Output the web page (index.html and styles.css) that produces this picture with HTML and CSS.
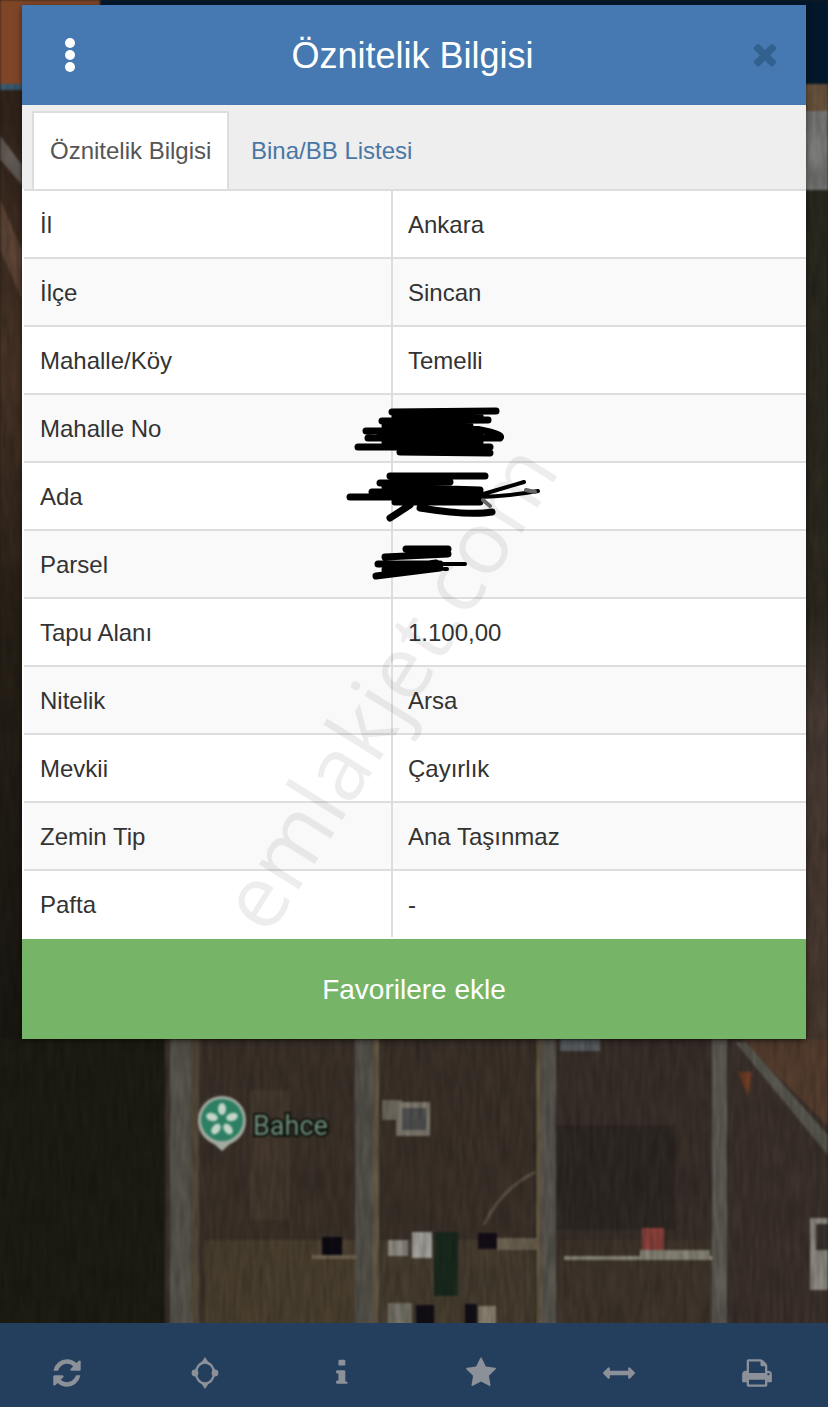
FILE: index.html
```html
<!DOCTYPE html>
<html lang="tr">
<head>
  <meta charset="UTF-8">
  <title>Öznitelik Bilgisi</title>
  <link rel="stylesheet" href="styles.css">
</head>
<body>
  <div class="screen">
    <!-- map behind the dialog -->
    <svg class="map" viewBox="0 0 828 1407" aria-hidden="true">
      <defs>
        <filter id="grain" x="0" y="0" width="100%" height="100%">
          <feTurbulence type="fractalNoise" baseFrequency="0.3 0.03" numOctaves="3" seed="7"/>
          <feColorMatrix type="matrix" values="0 0 0 0 0  0 0 0 0 0  0 0 0 0 0  1.6 0 0 0 -0.45"/>
        </filter>
        <linearGradient id="left-side" x1="0" y1="0" x2="0" y2="1">
          <stop offset="0" stop-color="#33251c"/>
          <stop offset="0.3" stop-color="#4a3528"/>
          <stop offset="0.55" stop-color="#2a2219"/>
          <stop offset="1" stop-color="#191812"/>
        </linearGradient>
        <linearGradient id="right-side" x1="0" y1="0" x2="0" y2="1">
          <stop offset="0" stop-color="#2b2a20"/>
          <stop offset="0.5" stop-color="#2e2a20"/>
          <stop offset="0.62" stop-color="#4b3d36"/>
          <stop offset="1" stop-color="#493a30"/>
        </linearGradient>
      </defs>

      <!-- top strip -->
      <rect x="-4" y="-4" width="836" height="88" fill="#03172b"/>
      <rect x="-4" y="-4" width="104" height="88" fill="#7f4527"/>
      <rect x="-4" y="84" width="104" height="6" fill="#3c5f74"/>
      <rect x="800" y="84" width="32" height="27" fill="#6d5740"/>
      <rect x="800" y="111" width="32" height="79" fill="#7b7b79"/>

      <!-- sides -->
      <rect x="-4" y="90" width="34" height="950" fill="url(#left-side)"/>
      <path d="M-4 130 L22 165 L22 185 L-4 155Z" fill="#8d8a86" opacity="0.55"/>
      <path d="M-4 190 L22 250 L22 300 L-4 240Z" fill="#6e5140" opacity="0.7"/>
      <rect x="800" y="190" width="32" height="850" fill="url(#right-side)"/>

      <!-- fields below the dialog -->
      <rect x="-4" y="1039" width="169" height="288" fill="#1e1d13"/>
      <rect x="165" y="1039" width="215" height="288" fill="#3c322a"/>
      <rect x="380" y="1039" width="155" height="288" fill="#3c322a"/>
      <rect x="555" y="1039" width="160" height="288" fill="#3a302a"/>
      <rect x="555" y="1125" width="120" height="105" fill="#2f2824"/>
      <rect x="727" y="1039" width="105" height="288" fill="#3d322c"/>
      <path d="M740 1039 H832 V1130Z" fill="#573f30"/>
      <rect x="205" y="1240" width="155" height="87" fill="#4c4130"/>
      <rect x="380" y="1240" width="155" height="87" fill="#483e31"/>
      <rect x="555" y="1240" width="160" height="87" fill="#40362d"/>
      <rect x="250" y="1090" width="40" height="130" fill="#4c3f33" opacity="0.6"/>

      <!-- roads -->
      <rect x="170" y="1039" width="20" height="288" fill="#5a574f"/>
      <rect x="190" y="1039" width="9" height="288" fill="#564c3d"/>
      <rect x="355" y="1039" width="18" height="288" fill="#56534c"/>
      <rect x="373" y="1039" width="6" height="288" fill="#665a46"/>
      <rect x="536" y="1039" width="5" height="288" fill="#665a46"/>
      <rect x="541" y="1039" width="15" height="288" fill="#5a5750"/>
      <rect x="712" y="1039" width="15" height="288" fill="#605d56"/>
      <path d="M735 1042 L746 1042 L832 1140 L832 1160Z" fill="#595951"/>
      <path d="M484 1225 Q500 1190 535 1172" fill="none" stroke="#5f5547" stroke-width="3"/>

      <!-- buildings -->
      <rect x="382" y="1100" width="20" height="20" fill="#6f6a5e"/>
      <rect x="396" y="1102" width="34" height="34" fill="#807b6f"/>
      <rect x="402" y="1108" width="24" height="22" fill="#4f4f50"/>
      <rect x="560" y="1039" width="40" height="12" fill="#5a6064"/>
      <rect x="322" y="1237" width="20" height="20" fill="#0e0a14"/>
      <rect x="312" y="1255" width="45" height="4" fill="#6f6450"/>
      <rect x="388" y="1240" width="20" height="16" fill="#8f8c84"/>
      <rect x="412" y="1232" width="20" height="26" fill="#a5a39c"/>
      <rect x="434" y="1232" width="24" height="64" fill="#1a2a1e"/>
      <rect x="478" y="1233" width="19" height="16" fill="#140d17"/>
      <rect x="497" y="1238" width="40" height="12" fill="#6f6553"/>
      <rect x="642" y="1228" width="22" height="22" fill="#8e433c"/>
      <rect x="564" y="1256" width="148" height="4" fill="#8e8b7c"/>
      <rect x="640" y="1250" width="70" height="10" fill="#8a8779"/>
      <rect x="810" y="1218" width="22" height="72" fill="#8d8a80"/>
      <rect x="816" y="1224" width="16" height="26" fill="#3a3430"/>
      <rect x="416" y="1305" width="18" height="22" fill="#120e16"/>
      <rect x="388" y="1303" width="24" height="24" fill="#77746a"/>
      <rect x="465" y="1304" width="12" height="23" fill="#120e16"/>
      <rect x="478" y="1306" width="18" height="21" fill="#8a8070"/>
      <path d="M738 1072 L752 1072 L748 1096Z" fill="#6e3c24"/>

      <rect x="0" y="84" width="828" height="1240" filter="url(#grain)" opacity="0.28"/>

      <!-- place marker -->
      <path d="M198 1120 a24 24 0 0 1 48 0 c0 14 -9 21 -16 24 l-8 7 l-8 -7 c-7 -3 -16 -10 -16 -24Z" fill="#a3aaa0"/>
      <circle cx="222" cy="1120" r="21" fill="#2c7f63"/>
      <g fill="#c5d6c8">
        <ellipse cx="222" cy="1109" rx="4" ry="6"/>
        <ellipse cx="232" cy="1117" rx="4" ry="6" transform="rotate(72 232 1117)"/>
        <ellipse cx="228" cy="1129" rx="4" ry="6" transform="rotate(144 228 1129)"/>
        <ellipse cx="216" cy="1129" rx="4" ry="6" transform="rotate(216 216 1129)"/>
        <ellipse cx="212" cy="1117" rx="4" ry="6" transform="rotate(288 212 1117)"/>
      </g>
      <text class="map-label" x="253" y="1135">Bahce</text>
    </svg>

    <div class="dialog">
      <header class="dialog-head">
        <div class="kebab"><span></span><span></span><span></span></div>
        <h1>Öznitelik Bilgisi</h1>
        <svg class="close-icon" viewBox="0 0 1792 1792"><path d="M1490 1322q0 40-28 68l-136 136q-28 28-68 28t-68-28l-294-294-294 294q-28 28-68 28t-68-28l-136-136q-28-28-28-68t28-68l294-294-294-294q-28-28-28-68t28-68l136-136q28-28 68-28t68 28l294 294 294-294q28-28 68-28t68 28l136 136q28 28 28 68t-28 68l-294 294 294 294q28 28 28 68z"/></svg>
      </header>

      <div class="tabs">
        <div class="tab active">Öznitelik Bilgisi</div>
        <div class="tab">Bina/BB Listesi</div>
      </div>

      <table class="attr-table">
        <tr><td>İl</td><td>Ankara</td></tr>
        <tr><td>İlçe</td><td>Sincan</td></tr>
        <tr><td>Mahalle/Köy</td><td>Temelli</td></tr>
        <tr><td>Mahalle No</td><td></td></tr>
        <tr><td>Ada</td><td></td></tr>
        <tr><td>Parsel</td><td></td></tr>
        <tr><td>Tapu Alanı</td><td>1.100,00</td></tr>
        <tr><td>Nitelik</td><td>Arsa</td></tr>
        <tr><td>Mevkii</td><td>Çayırlık</td></tr>
        <tr><td>Zemin Tip</td><td>Ana Taşınmaz</td></tr>
        <tr><td>Pafta</td><td>-</td></tr>
      </table>

      <button class="fav-btn" type="button">Favorilere ekle</button>
    </div>

    <nav class="toolbar">
      <div class="tool">
        <svg class="tool-icon" viewBox="0 0 1792 1792"><path d="M1639 1056q0 5-1 7-64 268-268 434.5t-478 166.5q-146 0-282.5-55t-243.5-157l-129 129q-19 19-45 19t-45-19-19-45v-448q0-26 19-45t45-19h448q26 0 45 19t19 45-19 45l-137 137q71 66 161 102t187 36q134 0 250-65t186-179q11-17 53-117 8-23 30-23h192q13 0 22.5 9.5t9.5 22.5zm25-800v448q0 26-19 45t-45 19h-448q-26 0-45-19t-19-45 19-45l138-138q-148-137-349-137-134 0-250 65t-186 179q-11 17-53 117-8 23-30 23h-199q-13 0-22.5-9.5t-9.5-22.5v-7q65-268 270-434.5t480-166.5q146 0 284 55.5t245 156.5l130-129q19-19 45-19t45 19 19 45z"/></svg>
      </div>
      <div class="tool">
        <svg class="tool-icon" viewBox="0 0 32 32">
          <ellipse cx="16" cy="16" rx="9" ry="10.5" fill="none" stroke="currentColor" stroke-width="2.4"/>
          <path d="M16 0 L20 6 H12Z M16 32 L12 26 H20Z"/>
          <circle cx="6" cy="16" r="3.4"/>
          <circle cx="26" cy="16" r="3.4"/>
        </svg>
      </div>
      <div class="tool">
        <svg class="tool-icon" viewBox="0 0 1792 1792"><path d="M1152 1376v64q0 26-19 45t-45 19h-512q-26 0-45-19t-19-45v-64q0-26 19-45t45-19h64v-384h-64q-26 0-45-19t-19-45v-64q0-26 19-45t45-19h384q26 0 45 19t19 45v576h64q26 0 45 19t19 45zm-128-1152v192q0 26-19 45t-45 19h-256q-26 0-45-19t-19-45v-192q0-26 19-45t45-19h256q26 0 45 19t19 45z"/></svg>
      </div>
      <div class="tool">
        <svg class="tool-icon" viewBox="0 0 1792 1792"><path d="M1728 647q0 22-26 48l-363 354 86 500q1 7 1 20 0 21-10.5 35.5t-30.5 14.5q-19 0-40-12l-449-236-449 236q-22 12-40 12-21 0-31.5-14.5t-10.5-35.5q0-6 2-20l86-500-364-354q-25-27-25-48 0-37 56-46l502-73 225-455q19-41 49-41t49 41l225 455 502 73q56 9 56 46z"/></svg>
      </div>
      <div class="tool">
        <svg class="tool-icon" viewBox="0 0 1792 1792"><path d="M1792 896q0 26-19 45l-256 256q-19 19-45 19t-45-19-19-45v-128h-1024v128q0 26-19 45t-45 19-45-19l-256-256q-19-19-19-45t19-45l256-256q19-19 45-19t45 19 19 45v128h1024v-128q0-26 19-45t45-19 45 19l256 256q19 19 19 45z"/></svg>
      </div>
      <div class="tool">
        <svg class="tool-icon" viewBox="0 0 1792 1792"><path d="M448 1536h896v-256h-896v256zm0-640h896v-384h-160q-40 0-68-28t-28-68v-160h-640v640zm1152 64q0-26-19-45t-45-19-45 19-19 45 19 45 45 19 45-19 19-45zm128 0v416q0 13-9.5 22.5t-22.5 9.5h-224v160q0 40-28 68t-68 28h-960q-40 0-68-28t-28-68v-160h-224q-13 0-22.5-9.5t-9.5-22.5v-416q0-79 56.5-135.5t135.5-56.5h64v-544q0-40 28-68t68-28h672q40 0 88 20t76 48l152 152q28 28 48 76t20 88v256h64q79 0 135.5 56.5t56.5 135.5z"/></svg>
      </div>
    </nav>

    <!-- site watermark, lies over the table -->
    <div class="watermark">emlakjet.com</div>

    <!-- hand-drawn marks over the hidden values -->
    <svg class="scribbles" viewBox="0 0 828 1407" aria-hidden="true">
      <path d="M392 412 L496 411 M382 421 L488 420 M395 417 L480 416 M366 431 L470 428 Q505 434 500 438 L368 438 M385 426 H470 M380 434 H480 M358 447 L490 447 M385 442 H480 M400 452 L490 453"/>
      <path d="M390 476 H485 M380 483 L450 482 M350 497 H480 M372 492 H480 M395 502 H480 M385 487 L480 490 M400 497 H470 M420 508 Q470 516 492 512 M390 518 L410 505"/>
      <path class="thin" d="M480 495 L524 482 M480 497 Q510 496 538 491"/>
      <path class="smudge" d="M483 500 L490 506 M526 490 L535 492"/>
      <path d="M406 549 H448 M385 557 L448 554 M378 564 H440 M376 576 L440 568 M385 570 L436 563"/>
      <path class="thin" d="M430 564 H465 M444 569 H447"/>
    </svg>
  </div>
</body>
</html>
```

FILE: styles.css
```css
* {
  box-sizing: border-box;
}

html, body {
  margin: 0;
  padding: 0;
}

body {
  font-family: "Liberation Sans", Arial, sans-serif;
  color: #333;
}

.screen {
  position: relative;
  width: 828px;
  height: 1407px;
  overflow: hidden;
  display: flex;
  flex-direction: column;
  padding-top: 5px;
  background: #1e1d13;
}

.map {
  position: absolute;
  left: 0;
  top: 0;
  width: 828px;
  height: 1407px;
  filter: blur(0.8px);
}

.map-label {
  font-family: Roboto, sans-serif;
  font-size: 27px;
  fill: #71907a;
  stroke: #0b100b;
  stroke-width: 4px;
  paint-order: stroke;
}

/* dialog */
.dialog {
  position: relative;
  width: 784px;
  margin-left: 22px;
  background: #fff;
  box-shadow: 0 2px 6px rgba(0, 0, 0, 0.5);
}

.dialog-head {
  height: 100px;
  background: #4679b2;
  display: flex;
  align-items: center;
  justify-content: space-between;
  padding: 0 24px 0 43px;
}

.dialog-head h1 {
  margin: 2px 0 0 2px;
  font-size: 36px;
  font-weight: normal;
  color: #fff;
}

.kebab {
  display: flex;
  flex-direction: column;
  gap: 2px;
}

.kebab span {
  width: 10px;
  height: 10px;
  border-radius: 50%;
  background: #fff;
}

.close-icon {
  width: 34px;
  height: 34px;
  margin-top: -3px;
  fill: #33618f;
}

.tabs {
  height: 84px;
  background: #eee;
  display: flex;
  padding: 6px 0 0 10px;
}

.tab {
  height: 78px;
  padding: 0 20px;
  display: flex;
  align-items: center;
  font-size: 24px;
  white-space: nowrap;
  color: #4a77a6;
  border: 2px solid transparent;
  border-bottom: none;
}

.tab.active {
  width: 197px;
  padding: 0 16px;
  background: #fff;
  color: #555;
  border-color: #ddd;
}

.attr-table {
  width: 782px;
  margin: 0 0 2px 2px;
  border-spacing: 0;
  table-layout: fixed;
  font-size: 24px;
}

.attr-table tr:nth-child(even) td {
  background: #f9f9f9;
}

.attr-table td {
  height: 68px;
  padding: 2px 16px 0;
  border-top: 2px solid #ddd;
  vertical-align: middle;
}

.attr-table td:first-child {
  width: 367px;
}

.attr-table td + td {
  padding-left: 15px;
  border-left: 2px solid #ddd;
}

.fav-btn {
  display: block;
  width: 100%;
  height: 100px;
  padding-top: 3px;
  border: none;
  background: #76b568;
  color: #fff;
  font-family: inherit;
  font-size: 28px;
}

/* bottom bar */
.toolbar {
  position: relative;
  margin-top: auto;
  height: 84px;
  padding-top: 16px;
  background: #243f5e;
  display: flex;
}

.tool {
  width: 138px;
  padding-right: 5px;
  display: flex;
  align-items: center;
  justify-content: center;
  color: #8c9098;
}

.tool-icon {
  width: 32px;
  height: 32px;
  fill: currentColor;
  filter: blur(0.5px);
}

/* overlays */
.watermark {
  position: absolute;
  left: 386px;
  top: 686px;
  font-family: "Open Sans", sans-serif;
  font-weight: 400;
  font-size: 88px;
  line-height: 1;
  color: rgba(0, 0, 0, 0.07);
  white-space: nowrap;
  transform: translate(-50%, -50%) rotate(-58deg);
  pointer-events: none;
}

.scribbles {
  position: absolute;
  left: 0;
  top: 0;
  width: 828px;
  height: 1407px;
  pointer-events: none;
  fill: none;
  stroke: #000;
  stroke-width: 7;
  stroke-linecap: round;
}

.scribbles .thin {
  stroke-width: 4;
}

.scribbles .smudge {
  stroke: #666;
  stroke-width: 4;
}
```
